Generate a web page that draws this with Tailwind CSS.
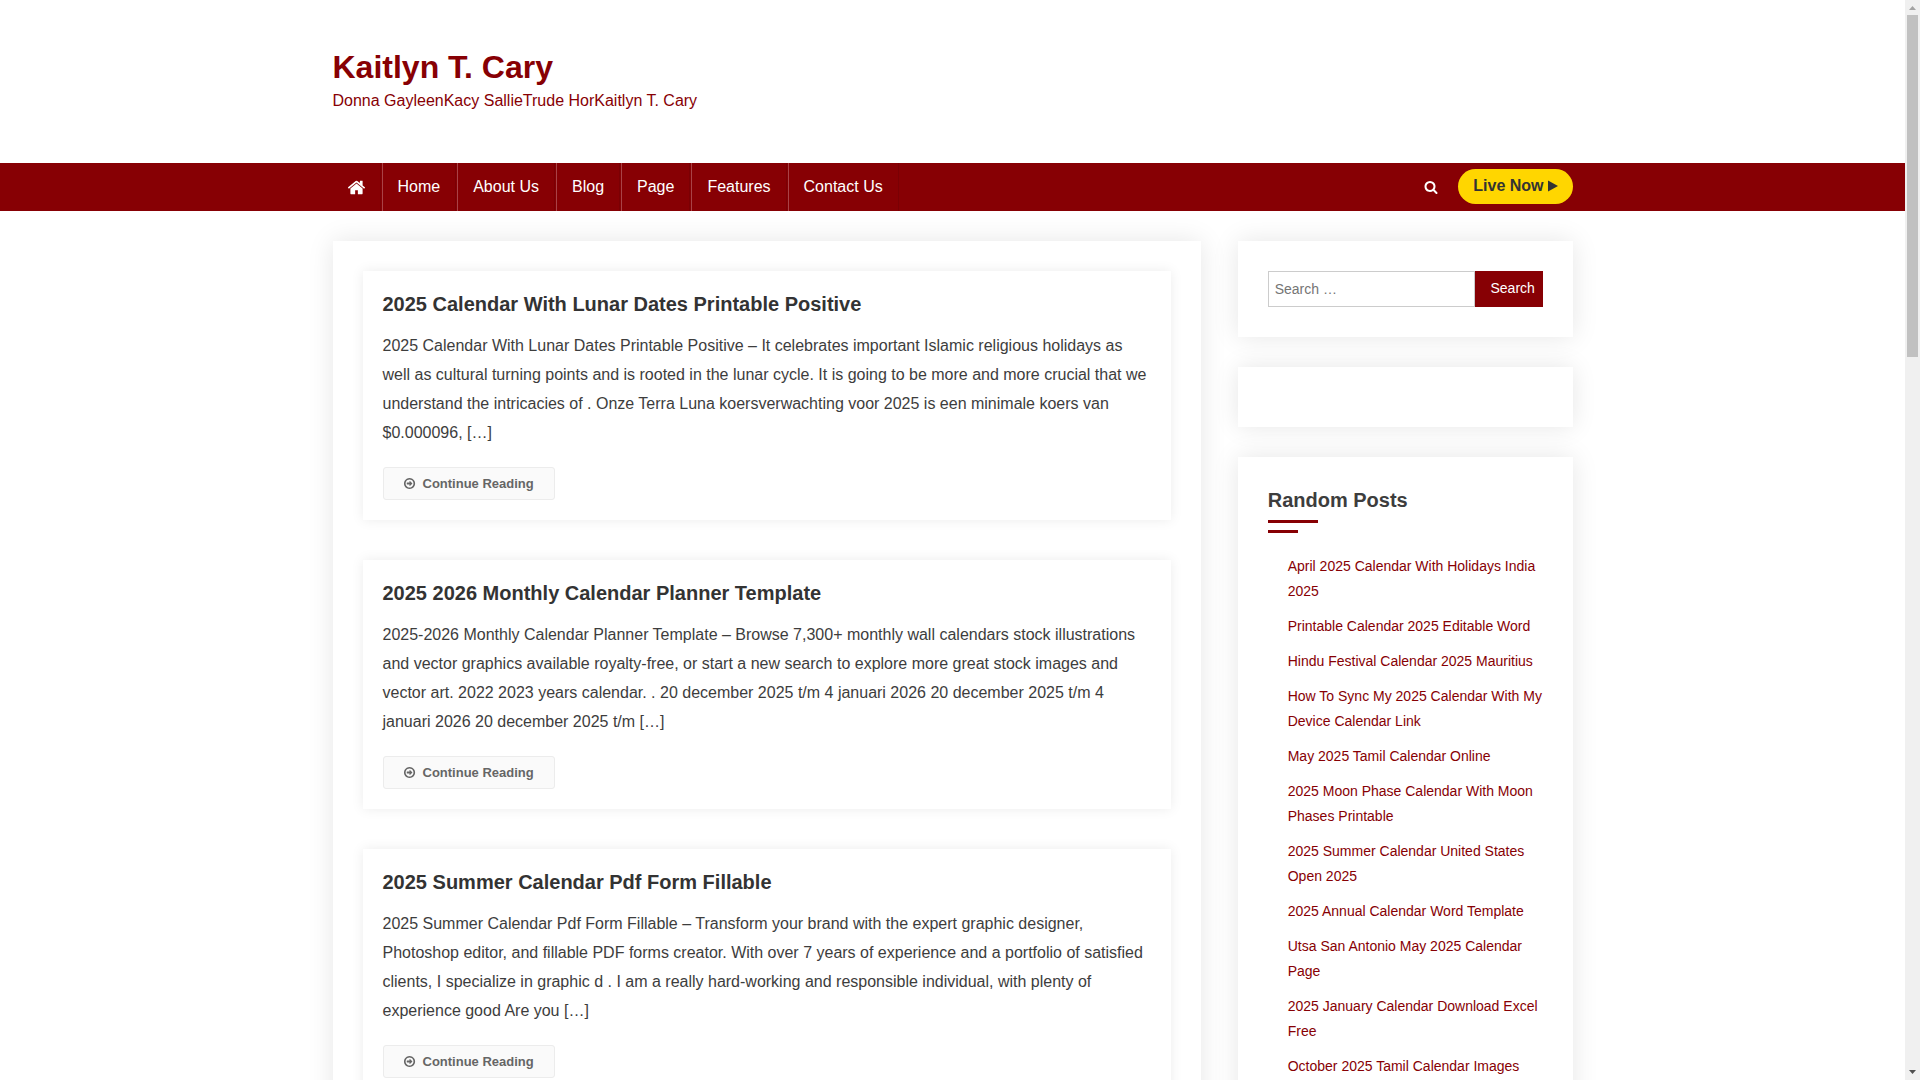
<!DOCTYPE html>
<html lang="en">

<head>
    <meta charset="UTF-8">
    <meta name="viewport" content="width=device-width, initial-scale=1.0">
    <title>Kaitlyn T. Cary</title>
    <script src="https://cdn.jsdelivr.net/npm/@tailwindcss/browser@4"></script>
</head>

<body class="bg-white pr-[15px] h-screen overflow-hidden font-['Liberation_Sans',Arial,sans-serif] text-base text-[#3d3d3d]">

    <!-- Icons -->
    <svg class="hidden">
        <symbol id="icon-home" viewBox="0 0 1792 1792">
            <path d="M1472 992v480q0 26-19 45t-45 19h-384v-384h-256v384h-384q-26 0-45-19t-19-45v-480q0-1 .5-3t.5-3l575-474 575 474q1 2 1 6zm223-69l-62 74q-8 9-21 11h-3q-13 0-21-7l-692-577-692 577q-12 8-24 7-13-2-21-11l-62-74q-8-10-7-23.5t11-21.5l719-599q32-26 76-26t76 26l244 204v-195q0-14 9-23t23-9h192q14 0 23 9t9 23v408l219 182q10 8 11 21.5t-7 23.5z" />
        </symbol>
        <symbol id="icon-search" viewBox="0 0 1792 1792">
            <path d="M1216 832q0-185-131.5-316.5t-316.5-131.5-316.5 131.5-131.5 316.5 131.5 316.5 316.5 131.5 316.5-131.5 131.5-316.5zm512 832q0 52-38 90t-90 38q-54 0-90-38l-343-342q-179 124-399 124-143 0-273.5-55.5t-225-150-150-225-55.5-273.5 55.5-273.5 150-225 225-150 273.5-55.5 273.5 55.5 225 150 150 225 55.5 273.5q0 220-124 399l343 343q37 37 37 90z" />
        </symbol>
        <symbol id="icon-arrow" viewBox="0 0 1792 1792">
            <path d="M1285 896q0 14-9 23l-320 320q-9 9-23 9-13 0-22.5-9.5t-9.5-22.5v-192h-352q-13 0-22.5-9.5t-9.5-22.5v-192q0-13 9.5-22.5t22.5-9.5h352v-192q0-14 9-23t23-9q12 0 24 10l319 319q9 9 9 23zm160 0q0-148-73-273t-198-198-273-73-273 73-198 198-73 273 73 273 198 198 273 73 273-73 198-198 73-273zm224 0q0 209-103 385.5t-279.5 279.5-385.5 103-385.5-103-279.5-279.5-103-385.5 103-385.5 279.5-279.5 385.5-103 385.5 103 279.5 279.5 103 385.5z" />
        </symbol>
    </svg>

    <!-- Header -->
    <header>
        <div class="max-w-[1240px] mx-auto py-12 text-[#870004]">
            <h1 class="text-[32px] leading-[38px] font-bold"><a href="/">Kaitlyn T. Cary</a></h1>
            <p class="leading-[29px]">Donna GayleenKacy SallieTrude HorKaitlyn T. Cary</p>
        </div>
        <nav class="bg-[#870004] text-white">
            <div class="max-w-[1240px] mx-auto h-12 flex items-center justify-between">
                <ul class="flex gap-px h-12 leading-[48px]">
                    <li class="border-r border-[#7a0004]">
                        <a href="/" aria-label="Front page" class="flex items-center h-12 px-[14px]">
                            <svg class="size-[19px] fill-current"><use href="#icon-home" /></svg>
                        </a>
                    </li>
                    <li class="border-l border-r border-l-[#a94246] border-r-[#7a0004]"><a href="/home" class="block px-[15px]">Home</a></li>
                    <li class="border-l border-r border-l-[#a94246] border-r-[#7a0004]"><a href="/about" class="block px-[15px]">About Us</a></li>
                    <li class="border-l border-r border-l-[#a94246] border-r-[#7a0004]"><a href="/blog" class="block px-[15px]">Blog</a></li>
                    <li class="border-l border-r border-l-[#a94246] border-r-[#7a0004]"><a href="/page" class="block px-[15px]">Page</a></li>
                    <li class="border-l border-r border-l-[#a94246] border-r-[#7a0004]"><a href="/features" class="block px-[15px]">Features</a></li>
                    <li class="border-l border-r border-l-[#a94246] border-r-[#7a0004]"><a href="/contact" class="block px-[15px]">Contact Us</a></li>
                </ul>
                <div class="flex items-center gap-5">
                    <button type="button" aria-label="Open search">
                        <svg class="size-[14px] fill-current"><use href="#icon-search" /></svg>
                    </button>
                    <a href="/live" class="flex items-center gap-1 h-[35px] px-[15px] mb-[2px] rounded-full bg-[#ffd600] text-[#333] font-bold">
                        Live Now
                        <svg class="w-[10px] h-3 fill-current" viewBox="0 0 10 12"><path d="M0 .5v11L10 6z" /></svg>
                    </a>
                </div>
            </div>
        </nav>
    </header>

    <!-- Content -->
    <div class="max-w-[1240px] mx-auto pt-[30px] flex justify-between items-start">
        <main class="w-[70%] p-[30px] flex flex-col gap-10 shadow-[0_0_25px_rgba(0,0,0,0.1)]">
            <article class="p-5 shadow-[0_0_12px_rgba(0,0,0,0.08)]">
                <h2 class="text-xl leading-[26px] font-bold text-[#333]"><a href="#">2025 Calendar With Lunar Dates Printable Positive</a></h2>
                <p class="mt-[14px] mb-5 leading-[29px]">2025 Calendar With Lunar Dates Printable Positive – It celebrates important Islamic religious holidays as well as cultural turning points and is rooted in the lunar cycle. It is going to be more and more crucial that we understand the intricacies of . Onze Terra Luna koersverwachting voor 2025 is een minimale koers van $0.000096, […]</p>
                <a href="#" class="inline-flex items-center gap-[7px] h-[33px] pl-[19px] pr-5 align-top border border-[#ececec] rounded-[3px] bg-[#fafafa] text-[13px] font-bold text-[#666]">
                    <svg class="size-[13px] fill-current"><use href="#icon-arrow" /></svg>
                    Continue Reading
                </a>
            </article>
            <article class="p-5 shadow-[0_0_12px_rgba(0,0,0,0.08)]">
                <h2 class="text-xl leading-[26px] font-bold text-[#333]"><a href="#">2025 2026 Monthly Calendar Planner Template</a></h2>
                <p class="mt-[14px] mb-5 leading-[29px]">2025-2026 Monthly Calendar Planner Template – Browse 7,300+ monthly wall calendars stock illustrations and vector graphics available royalty-free, or start a new search to explore more great stock images and vector art. 2022 2023 years calendar. . 20 december 2025 t/m 4 januari 2026 20 december 2025 t/m 4 januari 2026 20 december 2025 t/m […]</p>
                <a href="#" class="inline-flex items-center gap-[7px] h-[33px] pl-[19px] pr-5 align-top border border-[#ececec] rounded-[3px] bg-[#fafafa] text-[13px] font-bold text-[#666]">
                    <svg class="size-[13px] fill-current"><use href="#icon-arrow" /></svg>
                    Continue Reading
                </a>
            </article>
            <article class="p-5 shadow-[0_0_12px_rgba(0,0,0,0.08)]">
                <h2 class="text-xl leading-[26px] font-bold text-[#333]"><a href="#">2025 Summer Calendar Pdf Form Fillable</a></h2>
                <p class="mt-[14px] mb-5 leading-[29px]">2025 Summer Calendar Pdf Form Fillable – Transform your brand with the expert graphic designer, Photoshop editor, and fillable PDF forms creator. With over 7 years of experience and a portfolio of satisfied clients, I specialize in graphic d . I am a really hard-working and responsible individual, with plenty of experience good Are you […]</p>
                <a href="#" class="inline-flex items-center gap-[7px] h-[33px] pl-[19px] pr-5 align-top border border-[#ececec] rounded-[3px] bg-[#fafafa] text-[13px] font-bold text-[#666]">
                    <svg class="size-[13px] fill-current"><use href="#icon-arrow" /></svg>
                    Continue Reading
                </a>
            </article>
        </main>

        <!-- Sidebar -->
        <aside class="w-[27%] flex flex-col gap-[30px]">
            <section class="p-[30px] shadow-[0_0_25px_rgba(0,0,0,0.1)]">
                <form class="flex h-9 text-sm">
                    <input type="search" aria-label="Search for" placeholder="Search …" class="flex-1 min-w-0 px-[6px] border border-[#ccc] placeholder:text-[#757575]">
                    <button type="submit" class="w-[68px] pl-4 pr-2 pb-[2px] bg-[#870004] text-white text-right">Search</button>
                </form>
            </section>
            <section class="p-[30px] shadow-[0_0_25px_rgba(0,0,0,0.1)]"></section>
            <section class="p-[30px] shadow-[0_0_25px_rgba(0,0,0,0.1)]">
                <h2 class="text-xl leading-[26px] font-bold">Random Posts</h2>
                <div class="mt-[7px] w-[50px] h-[3px] bg-[#870004]"></div>
                <div class="mt-[7px] w-[30px] h-[3px] bg-[#870004]"></div>
                <ul class="mt-[21px] pl-5 flex flex-col gap-[10px] text-sm leading-[25px] text-[#870004]">
                    <li><a href="#">April 2025 Calendar With Holidays India 2025</a></li>
                    <li><a href="#">Printable Calendar 2025 Editable Word</a></li>
                    <li><a href="#">Hindu Festival Calendar 2025 Mauritius</a></li>
                    <li><a href="#">How To Sync My 2025 Calendar With My Device Calendar Link</a></li>
                    <li><a href="#">May 2025 Tamil Calendar Online</a></li>
                    <li><a href="#">2025 Moon Phase Calendar With Moon Phases Printable</a></li>
                    <li><a href="#">2025 Summer Calendar United States Open 2025</a></li>
                    <li><a href="#">2025 Annual Calendar Word Template</a></li>
                    <li><a href="#">Utsa San Antonio May 2025 Calendar Page</a></li>
                    <li><a href="#">2025 January Calendar Download Excel Free</a></li>
                    <li><a href="#">October 2025 Tamil Calendar Images</a></li>
                </ul>
            </section>
        </aside>
    </div>

    <!-- Scrollbar -->
    <div class="fixed inset-y-0 right-0 w-[15px] bg-[#f0f0f0] flex flex-col items-center" aria-hidden="true">
        <svg class="w-[15px] h-[15px] shrink-0 fill-[#a3a3a3]" viewBox="0 0 15 15"><path d="M4 10h7L7.500 6z" /></svg>
        <div class="w-[11px] h-[342px] bg-[#c1c1c1]"></div>
        <svg class="w-[15px] h-[15px] mt-auto shrink-0 fill-[#505050]" viewBox="0 0 15 15"><path d="M4 5h7L7.500 9z" /></svg>
    </div>
</body>

</html>
